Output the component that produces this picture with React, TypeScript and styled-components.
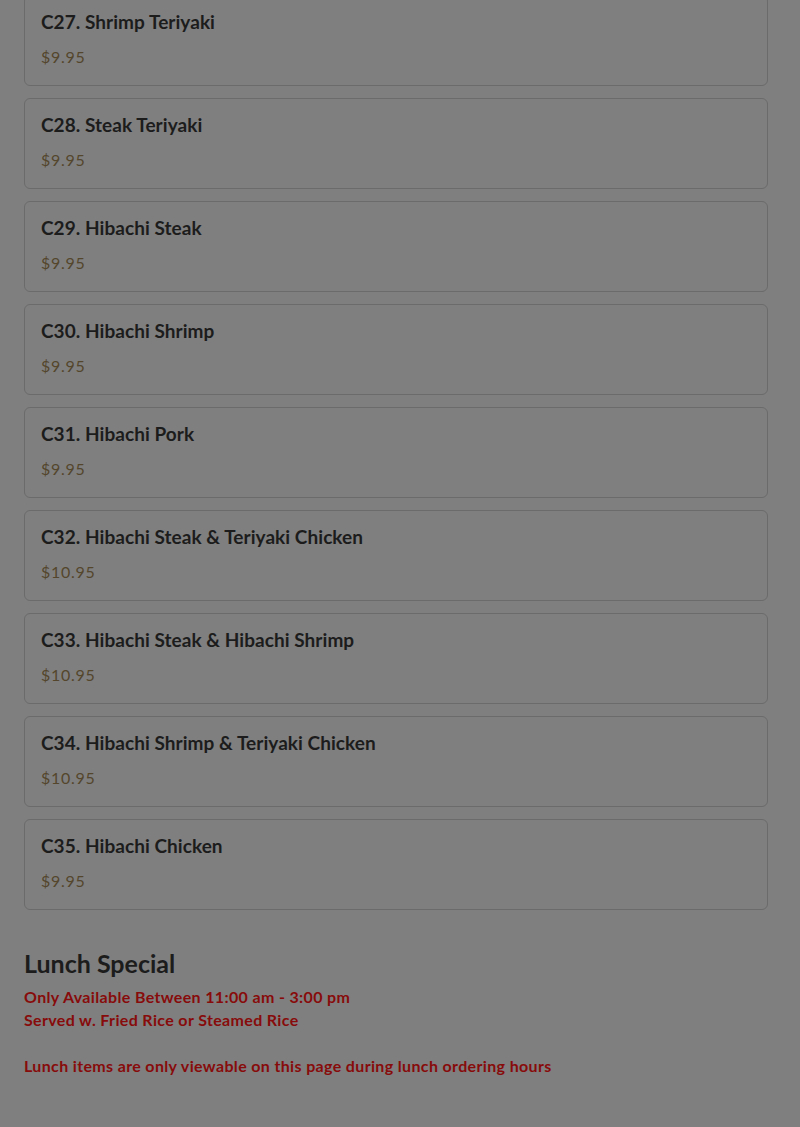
import React from "react";
import styled, { createGlobalStyle } from "styled-components";

const page_bg: string = "#7f7f7f";
const card_border: string = "#6b6b6b";
const title_color: string = "#1c1c1c";
const price_color: string = "#54462c";
const notice_color: string = "#870b0b";

const items = [
  { name: "C27. Shrimp Teriyaki", price: "$9.95" },
  { name: "C28. Steak Teriyaki", price: "$9.95" },
  { name: "C29. Hibachi Steak", price: "$9.95" },
  { name: "C30. Hibachi Shrimp", price: "$9.95" },
  { name: "C31. Hibachi Pork", price: "$9.95" },
  { name: "C32. Hibachi Steak & Teriyaki Chicken", price: "$10.95" },
  { name: "C33. Hibachi Steak & Hibachi Shrimp", price: "$10.95" },
  { name: "C34. Hibachi Shrimp & Teriyaki Chicken", price: "$10.95" },
  { name: "C35. Hibachi Chicken", price: "$9.95" },
];

function MenuCard(props) {
  return (
    <Card>
      <CardTitle>{props.item.name}</CardTitle>
      <CardPrice>{props.item.price}</CardPrice>
    </Card>
  );
}

export default function App() {
  return (
    <>
      <GlobalStyle />
      <Page>
        <ItemList>
          {items.map((item) => (
            <MenuCard key={item.name} item={item} />
          ))}
        </ItemList>
        <Section>
          <SectionTitle>Lunch Special</SectionTitle>
          <Notice>Only Available Between 11:00 am - 3:00 pm</Notice>
          <Notice>Served w. Fried Rice or Steamed Rice</Notice>
          <Notice $gap>Lunch items are only viewable on this page during lunch ordering hours</Notice>
        </Section>
      </Page>
    </>
  );
}

const GlobalStyle = createGlobalStyle`
  html, body {
    margin: 0;
    padding: 0;
    background: ${page_bg};
    overflow: hidden;
  }
  body {
    font-family: Lato, "Noto Sans", sans-serif;
  }
`;

const Page = styled.div`
  padding: 0 32px 0 24px;
  margin-top: -5px;
`;

const ItemList = styled.div`
  display: flex;
  flex-direction: column;
  gap: 12px;
`;

const Card = styled.div`
  border: 1px solid ${card_border};
  border-radius: 6px;
  padding: 14px 16px 16px;
  display: flex;
  flex-direction: column;
`;

const CardTitle = styled.div`
  font-size: 19px;
  font-weight: 700;
  line-height: 23px;
  color: ${title_color};
  letter-spacing: 0.05px;
`;

const CardPrice = styled.div`
  margin-top: 12px;
  font-size: 16px;
  line-height: 24px;
  color: ${price_color};
  letter-spacing: 0.7px;
`;

const Section = styled.div`
  padding-top: 37px;
  display: flex;
  flex-direction: column;
`;

const SectionTitle = styled.h2`
  margin: 0 0 6px;
  font-size: 25px;
  font-weight: 700;
  line-height: 32px;
  color: ${title_color};
`;

const Notice = styled.div<{ $gap?: boolean }>`
  margin-top: ${(p) => (p.$gap ? "23px" : "0")};
  font-size: 16px;
  font-weight: 700;
  line-height: 23px;
  letter-spacing: 0.35px;
  color: ${notice_color};
`;
